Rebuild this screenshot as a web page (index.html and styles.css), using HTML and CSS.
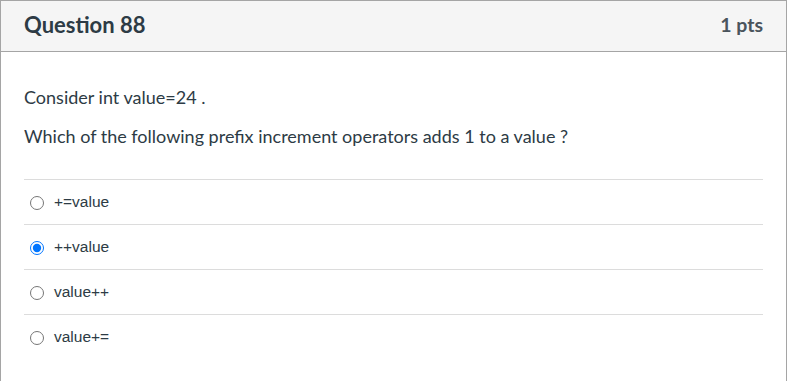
FILE: index.html
```html
<!DOCTYPE html>
<html>
<head>
<meta charset="utf-8">
<link rel="stylesheet" href="styles.css">
</head>
<body>
<div class="question">
  <div class="header">
    <div class="title">Question 88</div>
    <div class="pts">1 pts</div>
  </div>
  <div class="body">
    <p class="text">Consider int value=24 .</p>
    <p class="text">Which of the following prefix increment operators adds 1 to a value ?</p>
    <div class="answers">
      <label class="answer"><input type="radio" name="q"><span>+=value</span></label>
      <label class="answer"><input type="radio" name="q" checked><span>++value</span></label>
      <label class="answer"><input type="radio" name="q"><span>value++</span></label>
      <label class="answer"><input type="radio" name="q"><span>value+=</span></label>
    </div>
  </div>
</div>
</body>
</html>
```
FILE: styles.css
```css
html, body {
  margin: 0;
  padding: 0;
  background: #fff;
}
.question {
  width: 785px;
  border: 1px solid #a5a5a5;
  border-bottom: none;
  height: 380px;
  box-sizing: content-box;
  font-family: Lato, "Noto Sans", sans-serif;
  color: #2d3b45;
}
.header {
  display: flex;
  justify-content: space-between;
  align-items: center;
  height: 46px;
  padding: 0 23px 4px 23px;
  background: #f5f5f5;
  border-bottom: 1px solid #a5a5a5;
}
.title {
  font-weight: 700;
  font-size: 22px;
}
.pts {
  font-weight: 700;
  font-size: 19.5px;
  color: #4a545c;
}
.body {
  padding: 32px 23px 0 23px;
}
.text {
  margin: 0 0 12px 0;
  font-size: 18px;
  line-height: 27px;
}
.answers {
  margin-top: 29px;
}
.answer {
  display: flex;
  align-items: center;
  height: 44px;
  border-top: 1px solid #dcdcdc;
  font-family: "Liberation Sans", Arial, sans-serif;
  font-size: 15.5px;
  color: #2d3b45;
}
.answer input {
  margin: 1px 10px 0 6px;
  width: 14px;
  height: 14px;
}
```
